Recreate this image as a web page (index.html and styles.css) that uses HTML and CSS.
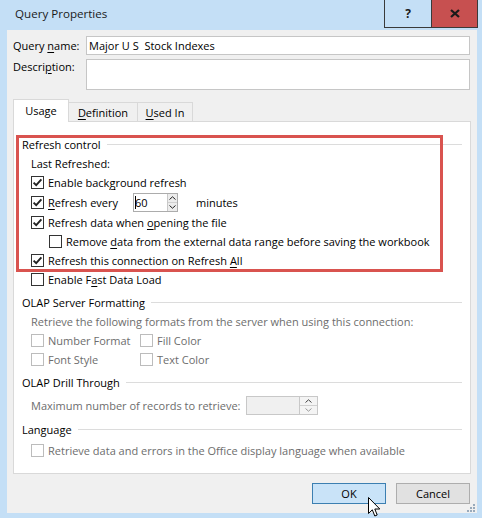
FILE: index.html
```html
<!DOCTYPE html>
<html lang="en">

<head>
  <meta charset="UTF-8">
  <title>Query Properties</title>
  <link rel="stylesheet" href="styles.css">
</head>

<body>
  <div class="window">
    <header class="titlebar">
      <span class="titlebar__title">Query Properties</span>
      <div class="titlebar__buttons">
        <button type="button" class="titlebar__help">?</button>
        <button type="button" class="titlebar__close">
          <svg width="10" height="9" viewBox="0 0 10 9">
            <path d="M1 1 L9 8 M9 1 L1 8" stroke="#1a1a1a" stroke-width="2.3" fill="none" />
          </svg>
        </button>
      </div>
    </header>

    <main class="client">
      <div class="query">
        <label class="query__label">Query <u>n</u>ame:</label>
        <div class="query__input">Major U S&nbsp; Stock Indexes</div>
        <label class="query__label query__label--top">Descri<u>p</u>tion:</label>
        <div class="query__input query__input--tall"></div>
      </div>

      <nav class="tabs">
        <span class="tab tab--active">Usa<u>g</u>e</span>
        <span class="tab"><u>D</u>efinition</span>
        <span class="tab"><u>U</u>sed In</span>
      </nav>

      <section class="panel">
        <div class="group">
          <div class="group__title">Refresh control</div>
          <div class="row">Last Refreshed:</div>
          <div class="row">
            <span class="check check--on"></span>
            <span>Enable back<u>g</u>round refresh</span>
          </div>
          <div class="row row--spin">
            <span class="check check--on"></span>
            <span class="row__label"><u>R</u>efresh every</span>
            <span class="spin">
              <span class="spin__value"><i class="spin__caret"></i>60</span>
              <span class="spin__arrows">
                <span class="spin__arrow"><svg width="7" height="4" viewBox="0 0 7 4"><path d="M0.5 3.5 L3.5 0.8 L6.5 3.5" stroke="#222" fill="none" /></svg></span>
                <span class="spin__arrow"><svg width="7" height="4" viewBox="0 0 7 4"><path d="M0.5 0.5 L3.5 3.2 L6.5 0.5" stroke="#222" fill="none" /></svg></span>
              </span>
            </span>
            <span class="row__unit">minutes</span>
          </div>
          <div class="row">
            <span class="check check--on"></span>
            <span>Refresh data when <u>o</u>pening the file</span>
          </div>
          <div class="row row--indent">
            <span class="check"></span>
            <span>Remove <u>d</u>ata from the external data range before saving the workbook</span>
          </div>
          <div class="row">
            <span class="check check--on"></span>
            <span>Refresh this connection on Refresh <u>A</u>ll</span>
          </div>
          <div class="row">
            <span class="check"></span>
            <span>Enable F<u>a</u>st Data Load</span>
          </div>
        </div>

        <div class="group group--disabled">
          <div class="group__title">OLAP Server Formatting</div>
          <div class="row">Retrieve the following formats from the server when using this connection:</div>
          <div class="options">
            <div class="row"><span class="check"></span><span>Number Format</span></div>
            <div class="row row--flush"><span class="check"></span><span>Fill Color</span></div>
            <div class="row"><span class="check"></span><span>Font Style</span></div>
            <div class="row row--flush"><span class="check"></span><span>Text Color</span></div>
          </div>
        </div>

        <div class="group group--disabled">
          <div class="group__title">OLAP Drill Through</div>
          <div class="row row--spin row--drill">
            <span class="row__label row__label--max">Maximum number of records to retrieve:</span>
            <span class="spin spin--off">
              <span class="spin__value"></span>
              <span class="spin__arrows">
                <span class="spin__arrow"><svg width="7" height="4" viewBox="0 0 7 4"><path d="M0.5 3.5 L3.5 0.8 L6.5 3.5" stroke="#444" fill="none" /></svg></span>
                <span class="spin__arrow"><svg width="7" height="4" viewBox="0 0 7 4"><path d="M0.5 0.5 L3.5 3.2 L6.5 0.5" stroke="#999" fill="none" /></svg></span>
              </span>
            </span>
          </div>
        </div>

        <div class="group group--disabled">
          <div class="group__title">Language</div>
          <div class="row row--lang">
            <span class="check"></span>
            <span>Retrieve data and errors in the Office display language when available</span>
          </div>
        </div>

        <div class="highlight"></div>
      </section>

      <footer class="footer">
        <button type="button" class="btn btn--default">OK</button>
        <button type="button" class="btn">Cancel</button>
      </footer>
    </main>

    <svg class="grip" width="8" height="8" viewBox="0 0 8 8">
      <rect x="6" y="0" width="2" height="2" fill="#9ab" />
      <rect x="3" y="3" width="2" height="2" fill="#9ab" />
      <rect x="6" y="3" width="2" height="2" fill="#9ab" />
      <rect x="0" y="6" width="2" height="2" fill="#9ab" />
      <rect x="3" y="6" width="2" height="2" fill="#9ab" />
      <rect x="6" y="6" width="2" height="2" fill="#9ab" />
    </svg>

    <svg class="cursor" width="13" height="21" viewBox="0 0 13 21">
      <path d="M0.5 0.5 L0.5 16.5 L4.3 12.8 L6.8 19 L9.2 18 L6.8 12 L11.8 12 Z" fill="#fff" stroke="#000" stroke-linejoin="round" />
    </svg>
  </div>
</body>

</html>
```

FILE: styles.css
```css
body {
  margin: 0;
  background: #c4dff6;
  font-family: "Open Sans", "Noto Sans", sans-serif;
  font-size: 11px;
  color: #000;
}

u {
  text-decoration-thickness: 1px;
  text-underline-offset: 2px;
}

.window {
  position: relative;
  width: 482px;
  height: 518px;
  display: flex;
  flex-direction: column;
}

/* title bar */
.titlebar {
  height: 30px;
  display: flex;
  align-items: flex-start;
  justify-content: space-between;
}

.titlebar__title {
  padding: 5px 0 0 15px;
  font-size: 11.6px;
  line-height: 17px;
  color: #1a1a1a;
}

.titlebar__buttons {
  display: flex;
  margin-right: 4px;
}

.titlebar__help,
.titlebar__close {
  width: 47px;
  height: 28px;
  padding: 0;
  border: 1px solid #3a3a3a;
  border-top: none;
  display: flex;
  align-items: center;
  justify-content: center;
}

.titlebar__help {
  background: #c4dff6;
  border-right: none;
  font: bold 12px "Open Sans", sans-serif;
  color: #1a1a1a;
}

.titlebar__close {
  background: #c75050;
}

/* client area */
.client {
  flex: 1;
  margin: 0 5px 5px 7px;
  padding: 6px 6px 9px 6px;
  background: #f0f0f0;
  display: flex;
  flex-direction: column;
}

.query {
  display: grid;
  grid-template-columns: 73px 1fr;
  row-gap: 4px;
  margin-right: 1px;
}

.query__label {
  line-height: 19px;
}

.query__label--top {
  line-height: 15px;
}

.query__input {
  height: 19px;
  box-sizing: border-box;
  border: 1px solid #c6c6c6;
  background: #fff;
  padding: 0 2px;
  line-height: 17px;
  white-space: pre;
}

.query__input--tall {
  height: 31px;
}

/* tabs */
.tabs {
  display: flex;
  align-items: flex-end;
  height: 22px;
  margin-top: 9px;
}

.tab {
  height: 19px;
  box-sizing: border-box;
  border: 1px solid #d9d9d9;
  border-bottom: none;
  background: #f0f0f0;
  display: flex;
  align-items: center;
  justify-content: center;
  margin-left: -1px;
}

.tab:nth-child(1) {
  width: 56px;
  margin-left: 0;
}

.tab:nth-child(2) {
  width: 70px;
}

.tab:nth-child(3) {
  width: 56px;
}

.tab--active {
  position: relative;
  z-index: 1;
  height: 23px;
  margin-bottom: -1px;
  background: #fff;
  padding-bottom: 2px;
}

.panel {
  position: relative;
  flex: 1;
  border: 1px solid #d9d9d9;
  background: #fff;
  padding: 12px 8px 0 8px;
}

.group + .group {
  margin-top: 3px;
}

.group__title {
  height: 20px;
  display: flex;
  align-items: center;
  gap: 6px;
}

.group__title::after {
  content: "";
  flex: 1;
  border-top: 1px solid #dcdcdc;
}

.row {
  height: 19px;
  display: flex;
  align-items: center;
  gap: 4px;
  padding-left: 9px;
  white-space: nowrap;
}

.row--spin {
  height: 21px;
}

.row--indent {
  padding-left: 27px;
}

.row--drill {
  margin-top: 3px;
}

.row--lang {
  margin-top: 2px;
}

.row__label {
  width: 81px;
}

.row__label--max {
  width: auto;
  margin-right: 1px;
}

.row__unit {
  margin-left: 14px;
}

.options {
  display: grid;
  grid-template-columns: 118px auto;
}

.row--flush {
  padding-left: 0;
}

.group--disabled .row {
  color: #6d6d6d;
}

.check {
  width: 13px;
  height: 13px;
  box-sizing: border-box;
  border: 1px solid #333;
  background: #fff;
  flex: none;
}

.group--disabled .check {
  border-color: #bcbcbc;
}

.check--on {
  background: #fff url("data:image/svg+xml,%3Csvg xmlns='http://www.w3.org/2000/svg' width='11' height='11' viewBox='0 0 11 11'%3E%3Cpath d='M1.6 5.6 L4.2 8.2 L9.4 2.4' stroke='%23222' stroke-width='1.9' fill='none'/%3E%3C/svg%3E") center no-repeat;
}

/* spin box */
.spin {
  display: flex;
  height: 19px;
  box-sizing: border-box;
  border: 1px solid #acacac;
  background: #fff;
  color: #000;
}

.spin__value {
  width: 32px;
  display: flex;
  align-items: center;
  padding-left: 1px;
}

.spin__caret {
  width: 1px;
  height: 13px;
  background: #000;
  margin-right: -1px;
}

.spin__arrows {
  width: 9px;
  display: flex;
  flex-direction: column;
  border-left: 1px solid #c8c8c8;
}

.spin__arrow {
  flex: 1;
  display: flex;
  align-items: center;
  justify-content: center;
  background: #ececec;
}

.spin__arrow + .spin__arrow {
  border-top: 1px solid #d0d0d0;
}

.spin--off {
  border-color: #c8c8c8;
}

.spin--off .spin__value {
  width: 51px;
  background: #f0f0f0;
}

.spin--off .spin__arrows {
  width: 17px;
}

.spin--off .spin__arrow {
  background: #f4f4f4;
}

.highlight {
  position: absolute;
  left: 2px;
  top: 13px;
  width: 427px;
  height: 137px;
  box-sizing: border-box;
  border: 3px solid #d9534f;
  pointer-events: none;
}

/* buttons */
.footer {
  display: flex;
  justify-content: flex-end;
  gap: 10px;
  margin: 9px 1px 0 0;
}

.btn {
  width: 74px;
  height: 21px;
  border: 1px solid #adadad;
  background: #e1e1e1;
  font: inherit;
  color: #000;
  padding: 0;
}

.btn--default {
  border-color: #3c7fb1;
  background: #c9e3f8;
}

.grip {
  position: absolute;
  right: 7px;
  bottom: 6px;
}

.cursor {
  position: absolute;
  left: 368px;
  top: 497px;
}
```
